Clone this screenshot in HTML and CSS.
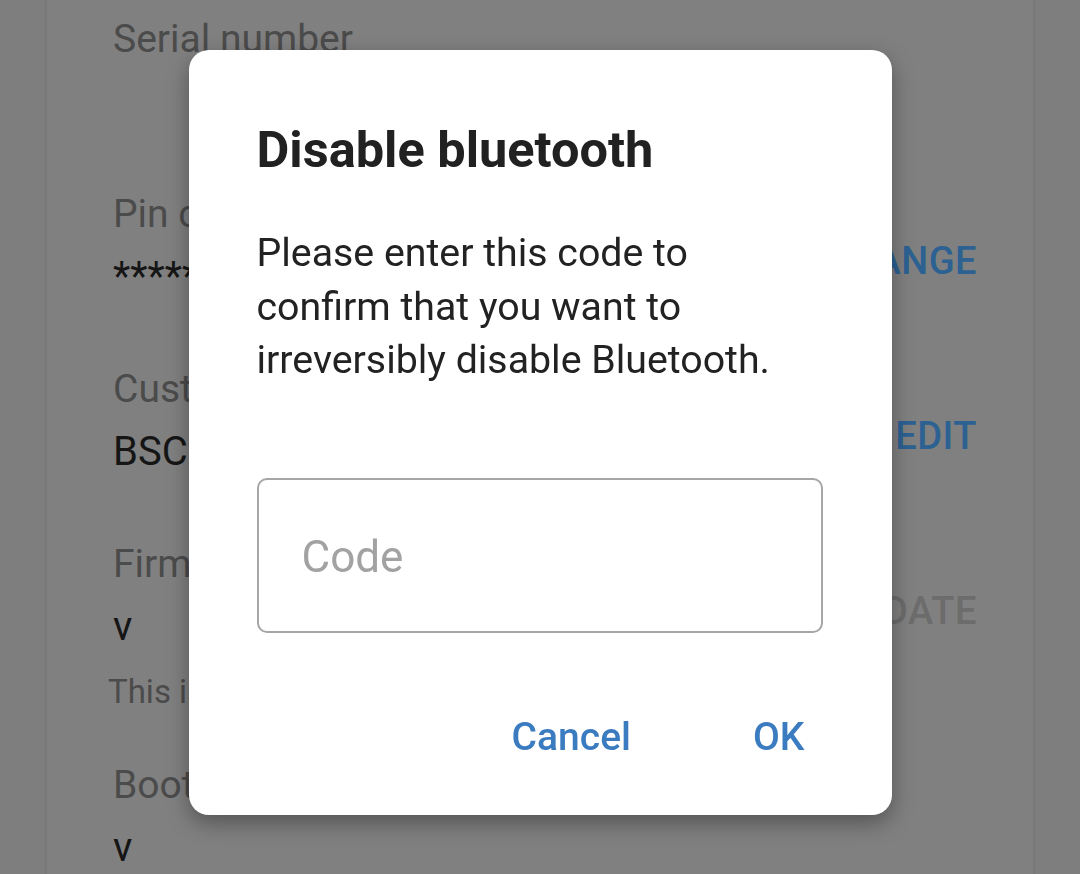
FILE: index.html
```html
<!DOCTYPE html>
<html>
<head>
<meta charset="utf-8">
<link rel="stylesheet" href="styles.css">
</head>
<body>
<div class="page">
  <div class="card">
    <div class="row">
      <div class="info">
        <div class="label">Serial number</div>
        <div class="value">&nbsp;</div>
      </div>
    </div>
    <div class="row">
      <div class="info">
        <div class="label">Pin code</div>
        <div class="value">******</div>
      </div>
      <div class="action">CHANGE</div>
    </div>
    <div class="row">
      <div class="info">
        <div class="label">Custom name</div>
        <div class="value">BSC IP43</div>
      </div>
      <div class="action">EDIT</div>
    </div>
    <div class="row">
      <div class="info">
        <div class="label">Firmware</div>
        <div class="value">v</div>
        <div class="note">This is the latest version</div>
      </div>
      <div class="action disabled">UPDATE</div>
    </div>
    <div class="row">
      <div class="info">
        <div class="label">Bootloader</div>
        <div class="value">v</div>
      </div>
    </div>
  </div>
</div>

<div class="overlay">
  <div class="dialog">
    <h1 class="title">Disable bluetooth</h1>
    <p class="message">Please enter this code to confirm that you want to irreversibly disable Bluetooth.</p>
    <input class="field" type="text" placeholder="Code">
    <div class="buttons">
      <span class="btn">Cancel</span>
      <span class="btn">OK</span>
    </div>
  </div>
</div>
</body>
</html>
```

FILE: styles.css
```css
html, body {
  margin: 0;
  padding: 0;
  height: 100%;
  overflow: hidden;
}
body {
  background: #7e7e7e;
  font-family: Roboto, "Noto Sans", "Liberation Sans", sans-serif;
}
.page {
  height: 100%;
  padding: 0 45px;
  box-sizing: border-box;
}
.card {
  height: 100%;
  background: #808080;
  border-left: 2px solid #787878;
  border-right: 2px solid #787878;
  padding: 17px 56px 0 66px;
  box-sizing: border-box;
  overflow: hidden;
}
.row {
  display: flex;
  justify-content: space-between;
  align-items: flex-start;
  margin-bottom: 50px;
}
.label {
  font-size: 39px;
  line-height: 44px;
  color: #4b4b4b;
  white-space: nowrap;
}
.value {
  font-size: 40px;
  line-height: 81px;
  color: #151515;
  white-space: nowrap;
}
.note {
  font-size: 33px;
  line-height: 40px;
  color: #4b4b4b;
  margin-top: 5px;
  margin-left: -5px;
  margin-bottom: 1px;
  white-space: nowrap;
}
.action {
  font-size: 38px;
  line-height: 44px;
  font-weight: 500;
  color: #2c6192;
  margin-top: 47px;
  letter-spacing: 0.5px;
}
.action.disabled {
  color: #6c6c6c;
}

.overlay {
  position: fixed;
  inset: 0;
  display: flex;
  justify-content: center;
  align-items: flex-start;
  padding-top: 50px;
}
.dialog {
  width: 703px;
  height: 765px;
  box-sizing: border-box;
  background: #ffffff;
  border-radius: 20px;
  box-shadow: 0 8px 22px rgba(0, 0, 0, 0.35);
  padding: 70px 68px 0 68px;
  display: flex;
  flex-direction: column;
}
.title {
  margin: 0;
  font-size: 50.5px;
  line-height: 60px;
  font-weight: 700;
  color: #212121;
}
.message {
  margin: 47px 0 0 0;
  max-width: 540px;
  font-size: 39.3px;
  line-height: 53.5px;
  color: #222222;
}
.field {
  margin-top: 90px;
  width: 566px;
  height: 155px;
  flex-shrink: 0;
  box-sizing: border-box;
  border: 2px solid #a6a6a6;
  border-radius: 10px;
  padding: 4px 0 0 43px;
  font-family: Roboto, "Noto Sans", "Liberation Sans", sans-serif;
  font-size: 44px;
  color: #212121;
  background: #fff;
  outline: none;
}
.field::placeholder {
  color: #a2a2a2;
  opacity: 1;
}
.buttons {
  margin-top: 80px;
  display: flex;
  justify-content: flex-end;
  gap: 122px;
  padding-right: 19px;
}
.btn {
  font-size: 39px;
  line-height: 48px;
  font-weight: 500;
  color: #3b7bc0;
}
```
